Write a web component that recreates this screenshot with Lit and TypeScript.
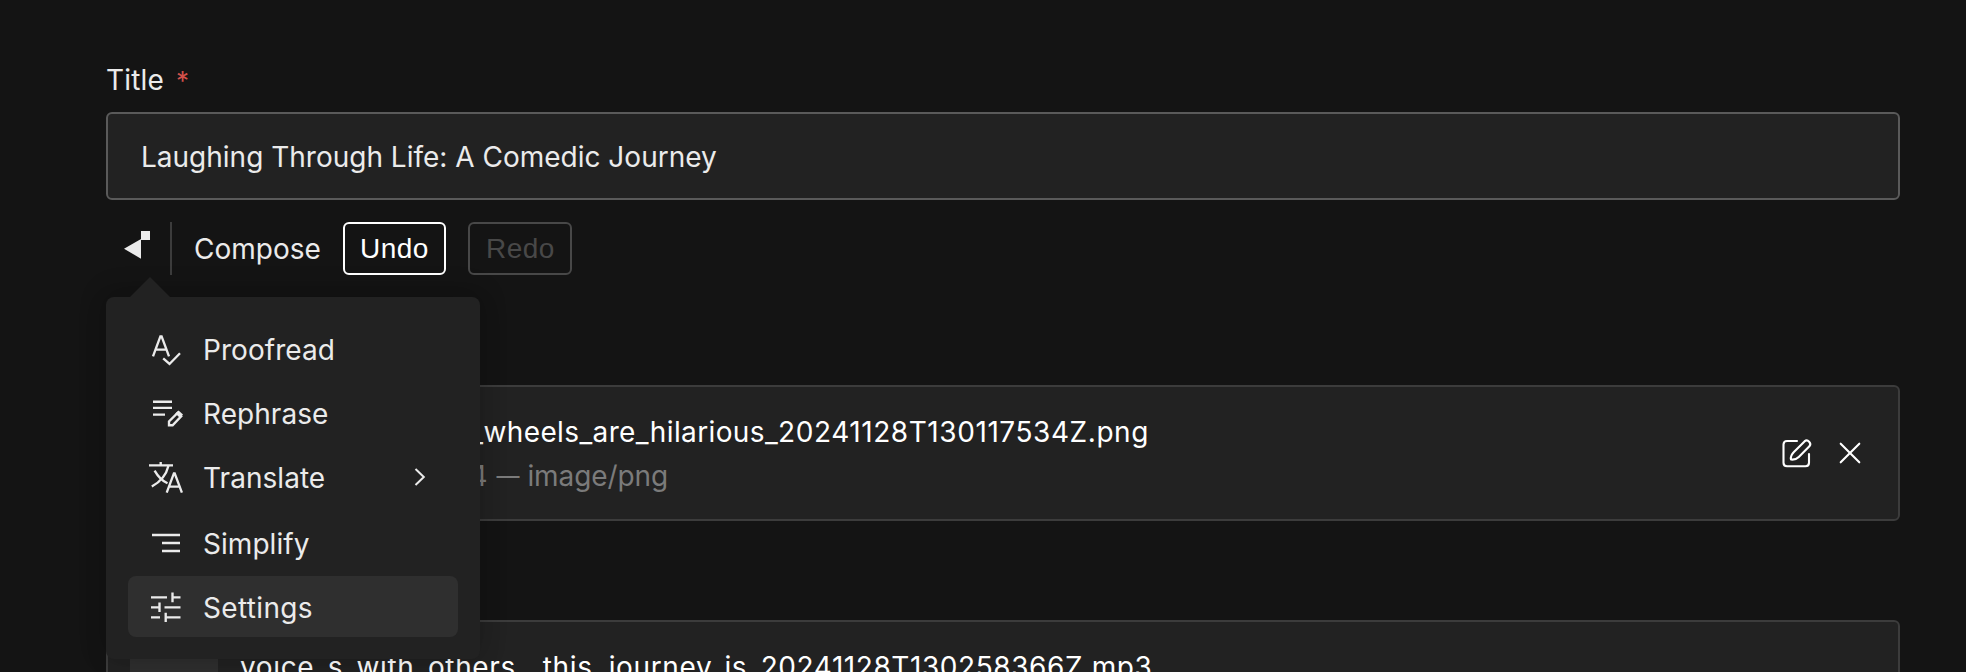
import { LitElement, html, css, svg } from "lit";
import { customElement, property } from "lit/decorators.js";
import { classMap } from "lit/directives/class-map.js";

const icons = {
  proofread: svg`<path d="M7 37.3 14.4 17.3h1.2L23 37.3M9.6 30.6H20.4M17.2 39.4l6.3 5.6L34 34.3"/>`,
  rephrase: svg`<path d="M7 18.7H26M7 24.9H26M7 31.6H19"/><path d="M23 42.2V38.4L31.6 29.8 35.2 33.2 26.6 42.2Z"/><path class="fill" d="M29.3 30.5 32.6 27.5 37 31.5 34 35Z"/>`,
  translate: svg`<path d="M3 18.3H27M14.7 15V18.3M22.4 19C20.5 27 14 35 5.8 39.6M8.6 23.6C12 29.5 16.5 34 21.5 36.3M20.7 45.6 27.9 26.4h.8L35.9 45.6M23.2 39.6H33.4"/>`,
  simplify: svg`<path d="M6 22H34M16 30H34M16 38H34"/>`,
  settings: svg`<path d="M5 20.4H21M26.5 15.6V25.2M26.5 20.4H34.5M5 30.4H13.5M13.5 25.4V35M18.5 30.4H34.5M5 40.4H14M19.7 35.8V45M19.7 40.4H34.5"/>`,
};

@customElement("compose-menu")
class ComposeMenu extends LitElement {
  static styles = css`
    :host { display: block; }
    .menu {
      position: relative; box-sizing: border-box; width: 374px; height: 362px;
      padding: 22px; display: flex; flex-direction: column; gap: 3.1px;
      background: #222; border-radius: 8px;
      box-shadow: 0 -4px 28px rgba(0, 0, 0, 0.18), 0 4px 24px rgba(0, 0, 0, 0.08);
    }
    .caret {
      position: absolute; left: 24px; top: -20px;
      border: 20px solid transparent; border-top: 0; border-bottom-color: #222;
    }
    .item { display: flex; align-items: center; height: 60.8px; padding: 0 31px 0 18px; border-radius: 8px; flex: none; }
    .item.active { background: #2f2f2f; }
    .item.parent { margin-bottom: 1.6px; }
    .label { flex: 1; padding: 2px 0 0 17px; letter-spacing: 0.05px; line-height: 58px; }
    .active .label { letter-spacing: 0.35px; }
    .icon { width: 40px; height: 60px; fill: none; stroke: #ebebeb; stroke-width: 2.35; }
    .icon .fill { fill: #ebebeb; stroke: none; }
    .chevron { width: 16px; height: 20px; fill: none; stroke: #ebebeb; stroke-width: 2; margin-right: -1px; }
  `;
  render() {
    const items = [
      { label: "Proofread", icon: icons.proofread },
      { label: "Rephrase", icon: icons.rephrase },
      { label: "Translate", icon: icons.translate, parent: true },
      { label: "Simplify", icon: icons.simplify },
      { label: "Settings", icon: icons.settings, active: true },
    ];
    return html`<div class="menu">
      <div class="caret"></div>
      ${items.map(
        (i) => html`<div class=${classMap({ item: true, active: !!i.active, parent: !!i.parent })}>
          <svg class="icon" viewBox="0 0 40 60">${i.icon}</svg>
          <span class="label">${i.label}</span>
          ${i.parent ? html`<svg class="chevron" viewBox="0 0 16 20"><path d="M3.5 2 11.8 10 3.5 18" /></svg>` : ""}
        </div>`
      )}
    </div>`;
  }
}

@customElement("upload-card")
class UploadCard extends LitElement {
  @property() lead = "";
  @property() name = "";
  @property() stamp = "";
  @property() size = "";
  @property() type = "";
  @property({ type: Boolean, reflect: true }) audio = false;
  static styles = css`
    :host { display: block; }
    .card {
      box-sizing: border-box; height: 136px; padding: 22px; display: flex; align-items: center;
      background: #222; border: 2px solid #3c3c3c; border-radius: 6px;
    }
    .thumb { width: 88px; height: 88px; background: #2f2f2f; flex: none; }
    .text { flex: 1; padding: 2px 0 0 22px; min-width: 0; }
    .line { display: flex; height: 44px; line-height: 44px; white-space: nowrap; }
    .name { color: #fff; letter-spacing: 0.37px; }
    :host([audio]) .name { letter-spacing: 0.64px; }
    .name .stamp { letter-spacing: 0.57px; }
    .meta { color: #7b7b7b; letter-spacing: -0.1px; }
    .lead { display: flex; justify-content: flex-end; overflow: hidden; }
    .name .lead { width: 243.5px; }
    .meta .lead { width: 247.5px; }
    .dash { font-size: 23px; margin: 0 8px 0 9px; }
    .actions { display: flex; gap: 20px; padding-right: 9px; }
    .action { width: 34px; height: 34px; fill: none; stroke: #fff; stroke-width: 2.1; stroke-linecap: round; stroke-linejoin: round; }
  `;
  render() {
    return html`<div class="card">
      <div class="thumb"></div>
      <div class="text">
        <div class="line name">
          ${this.lead ? html`<span class="lead">${this.lead}</span>` : ""}<span>${this.name}</span><span class="stamp">${this.stamp}</span>
        </div>
        <div class="line meta">
          ${this.size ? html`<span class="lead">${this.size}</span><span class="dash">—</span><span>${this.type}</span>` : ""}
        </div>
      </div>
      <div class="actions">
        <svg class="action" viewBox="0 0 34 34">
          <path d="M18 5H8Q4.500 5 4.500 8.500V26.700Q4.500 30.200 8 30.200H26.500Q30 30.200 30 26.700V18" />
          <path d="M12 23.500C11.200 19.700 12.900 18 14.900 16L25.500 5.400C28.700 2.700 33 7.200 30.400 10.300L19.800 20.900C17.600 23.100 15.500 24 12 23.500Z" />
        </svg>
        <svg class="action" viewBox="0 0 34 34"><path d="M7.700 7.700 26.300 26.300M26.300 7.700 7.700 26.300" /></svg>
      </div>
    </div>`;
  }
}

@customElement("app-root")
class AppRoot extends LitElement {
  static styles = css`
    :host {
      display: block; box-sizing: border-box; width: 100%; height: 672px; overflow: hidden;
      padding: 60px 66px 0 106px; background: #141414; color: #ebebeb;
      font: 28px Inter, "Liberation Sans", sans-serif;
    }
    .label { height: 40px; line-height: 40px; margin-bottom: 12px; letter-spacing: 0.15px; }
    .required { color: #d2504a; margin-left: 12px; font-size: 26px; }
    .input {
      box-sizing: border-box; height: 88px; line-height: 86px; padding-left: 33px;
      background: #222; border: 2px solid #5a5a5a; border-radius: 6px;
    }
    .toolbar { position: relative; z-index: 1; display: flex; margin-top: 22px; height: 53px; line-height: 53px; }
    .logo { width: 64px; height: 53px; fill: #ebebeb; }
    .compose { box-sizing: border-box; width: 173px; padding-left: 22px; line-height: 55px; border-left: 2px solid #3c3c3c; }
    .btn {
      box-sizing: border-box; height: 53px; width: 103px; padding-left: 15px; line-height: 49px;
      border: 2px solid #fff; border-radius: 6px; color: #fff;
      font-family: "Liberation Sans", Arial, sans-serif; letter-spacing: 0.5px;
    }
    .btn.disabled { margin-left: 22px; width: 104px; padding-left: 16px; border-color: #484848; color: #484848; }
    .popup { position: absolute; left: 0; top: 75px; line-height: normal; }
    .image { display: block; margin-top: 110px; }
    .audio { display: block; margin-top: 99px; }
  `;
  render() {
    return html`
      <div class="label">Title<span class="required">*</span></div>
      <div class="input">Laughing Through Life: A Comedic Journey</div>
      <div class="toolbar">
        <svg class="logo" viewBox="0 0 64 53"><path d="M18 26.700 35 17V36.700ZM35 9H44V18H35Z" /></svg>
        <div class="compose">Compose</div>
        <div class="btn">Undo</div>
        <div class="btn disabled">Redo</div>
        <compose-menu class="popup"></compose-menu>
      </div>
      <upload-card class="image" .lead=${"_"} .name=${"wheels_are_hilarious_"} .stamp=${"20241128T130117534Z.png"}
        .size=${"4"} .type=${"image/png"}></upload-card>
      <upload-card class="audio" audio .name=${"voice_s_with_others__this_journey_is_"} .stamp=${"20241128T130258366Z.mp3"}></upload-card>
    `;
  }
}
